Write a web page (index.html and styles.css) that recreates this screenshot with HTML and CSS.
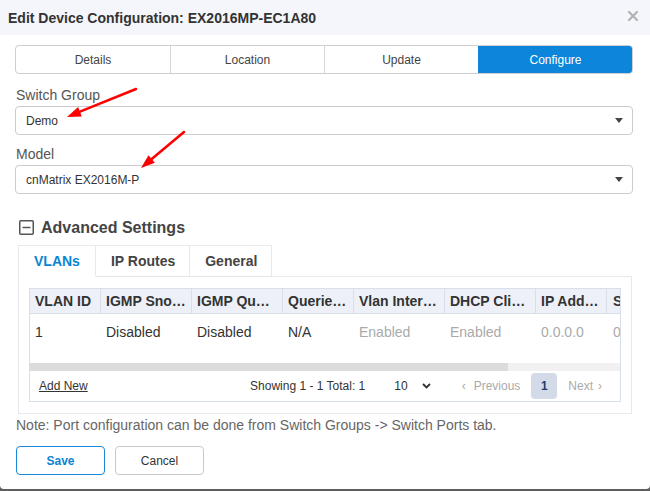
FILE: index.html
```html
<!DOCTYPE html>
<html>
<head>
<meta charset="utf-8">
<link rel="stylesheet" href="styles.css">
</head>
<body>
<div class="modal">
  <div class="modal-header">
    <span class="title">Edit Device Configuration: EX2016MP-EC1A80</span>
    <svg class="close" width="10" height="10" viewBox="0 0 10 10"><path d="M1 1L9 9M9 1L1 9" stroke="#b3b3b3" stroke-width="2.2" stroke-linecap="square"/></svg>
  </div>
  <div class="modal-body">
    <div class="segmented">
      <div class="seg">Details</div>
      <div class="seg">Location</div>
      <div class="seg">Update</div>
      <div class="seg active">Configure</div>
    </div>

    <div class="field">
      <div class="label">Switch Group</div>
      <div class="select"><span>Demo</span><svg width="8" height="5" viewBox="0 0 8 5"><path d="M0 0H8L4 5Z" fill="#444"/></svg></div>
    </div>
    <div class="field">
      <div class="label">Model</div>
      <div class="select"><span>cnMatrix EX2016M-P</span><svg width="8" height="5" viewBox="0 0 8 5"><path d="M0 0H8L4 5Z" fill="#444"/></svg></div>
    </div>

    <div class="adv-title">
      <svg width="15" height="15" viewBox="0 0 15 15"><rect x="0.75" y="0.75" width="13.5" height="13.5" rx="1" fill="none" stroke="#555" stroke-width="1.5"/><path d="M3.5 7.5H11.5" stroke="#555" stroke-width="1.5"/></svg>
      <span>Advanced Settings</span>
    </div>

    <div class="tabs">
      <div class="tab active">VLANs</div>
      <div class="tab">IP Routes</div>
      <div class="tab">General</div>
    </div>
    <div class="panel">
      <div class="grid">
        <div class="grid-row head">
          <div class="c w71">VLAN ID</div>
          <div class="c w91">IGMP Sno…</div>
          <div class="c w91">IGMP Qu…</div>
          <div class="c w71">Querie…</div>
          <div class="c w91">Vlan Inter…</div>
          <div class="c w91">DHCP Cli…</div>
          <div class="c w71">IP Add…</div>
          <div class="c last">S</div>
        </div>
        <div class="grid-body">
          <div class="grid-row data">
            <div class="c w71">1</div>
            <div class="c w91">Disabled</div>
            <div class="c w91">Disabled</div>
            <div class="c w71">N/A</div>
            <div class="c w91 muted">Enabled</div>
            <div class="c w91 muted">Enabled</div>
            <div class="c w71 muted">0.0.0.0</div>
            <div class="c last muted">0</div>
          </div>
        </div>
        <div class="hscroll"><div class="thumb"></div></div>
        <div class="grid-footer">
          <a class="add-new">Add New</a>
          <span class="showing">Showing 1 - 1 Total: 1</span>
          <span class="page-size">10</span>
          <svg class="chev" width="9" height="6" viewBox="0 0 9 6"><path d="M1 1L4.5 4.5L8 1" fill="none" stroke="#333" stroke-width="1.8"/></svg>
          <span class="pg disabled"><span class="lsaquo">‹</span>Previous</span>
          <span class="pg-num">1</span>
          <span class="pg disabled">Next<span class="rsaquo">›</span></span>
        </div>
      </div>
    </div>

    <div class="note">Note: Port configuration can be done from Switch Groups -&gt; Switch Ports tab.</div>

    <div class="actions">
      <button class="btn primary">Save</button>
      <button class="btn">Cancel</button>
    </div>
  </div>

  <svg class="annotations" width="650" height="491" viewBox="0 0 650 491">
    <line x1="136" y1="89" x2="80" y2="111.7" stroke="#ff0000" stroke-width="2.5" stroke-linecap="round"/>
    <polygon points="67,117 78.1,107.1 81.8,116.4" fill="#ff0000"/>
    <line x1="184" y1="132" x2="151.7" y2="159" stroke="#ff0000" stroke-width="2.5" stroke-linecap="round"/>
    <polygon points="141,168 148.5,155.2 154.9,162.8" fill="#ff0000"/>
  </svg>
</div>
</body>
</html>
```

FILE: styles.css
```css
* { box-sizing: border-box; }
html, body { margin: 0; padding: 0; }
body {
  background: #5e5e5e;
  font-family: "Liberation Sans", Arial, sans-serif;
  color: #333;
  width: 650px;
  height: 491px;
  overflow: hidden;
}
.modal {
  position: relative;
  width: 650px;
  height: 489px;
  background: #fff;
  border-radius: 0 0 4px 4px;
  overflow: hidden;
}
.modal-header {
  height: 35px;
  background: #f5f6fb;
  display: flex;
  align-items: center;
  justify-content: space-between;
  padding: 0 12px 0 8px;
}
.title {
  font-size: 14px;
  font-weight: bold;
  color: #333;
}
.close { display: block; margin-top: -4px; }

.modal-body {
  padding: 10px 17px 0 15px;
}

.segmented {
  display: grid;
  grid-template-columns: repeat(4, 1fr);
  height: 29px;
  border: 1px solid #cfcfcf;
  border-radius: 4px;
  overflow: hidden;
  margin-bottom: 13px;
}
.seg {
  display: flex;
  align-items: center;
  justify-content: center;
  font-size: 12px;
  color: #444;
  border-left: 1px solid #d6d6d6;
}
.seg:first-child { border-left: none; }
.seg.active {
  background: #0b86db;
  color: #fff;
  border-left-color: #0b86db;
}

.field { margin-bottom: 11px; }
.label {
  font-size: 14px;
  line-height: 17px;
  color: #555;
  padding-left: 1px;
  margin-bottom: 2px;
}
.select {
  height: 29px;
  border: 1px solid #cccccc;
  border-radius: 4px;
  display: flex;
  align-items: center;
  justify-content: space-between;
  padding: 0 9px 0 10px;
  font-size: 12px;
  color: #333;
}

.adv-title {
  margin-top: 25px;
  height: 17px;
  display: flex;
  align-items: center;
  padding-left: 4px;
  gap: 7px;
  font-size: 16px;
  font-weight: bold;
  color: #444;
}
.adv-title svg { display: block; }

.tabs {
  margin: 9px 0 0 3px;
  display: flex;
  position: relative;
  z-index: 1;
  margin-bottom: -1px;
}
.tab {
  height: 32px;
  padding: 0 14px 0 15px;
  display: flex;
  align-items: center;
  font-size: 14px;
  font-weight: bold;
  color: #444;
  border-top: 1px solid #e6e9ee;
  border-right: 1px solid #e6e9ee;
  border-bottom: 1px solid #e3e6eb;
  background: #fff;
}
.tab.active {
  padding: 0 15px 0 15px;
  color: #0b84d4;
  border-left: 1px solid #e6e9ee;
  border-bottom-color: #fff;
}
.panel {
  margin: 0 1px 0 3px;
  border: 1px solid #e6e9ee;
  padding: 11px 10px 11px 10px;
}

.grid {
  border: 1px solid #d8dfe9;
  overflow: hidden;
}
.grid-row {
  display: flex;
  white-space: nowrap;
}
.grid-row.head {
  height: 25px;
  background: #edf1f7;
  border-bottom: 1px solid #d8dfe9;
}
.head .c {
  font-weight: bold;
  font-size: 14px;
  color: #333;
  line-height: 24px;
  border-right: 1px solid #d8dfe9;
}
.head .c.last { border-right: none; }
.c {
  flex: none;
  padding-left: 5px;
  overflow: hidden;
}
.w71 { width: 71px; }
.w91 { width: 91px; }
.c.last { width: 14px; padding-left: 6px; overflow: visible; }
.grid-body { height: 49px; }
.grid-row.data {
  padding-top: 9px;
  font-size: 14px;
  line-height: 18px;
  color: #333;
}
.muted { color: #aaaaaa; }

.hscroll {
  height: 8px;
  background: #f1f1f1;
}
.thumb {
  width: 478px;
  height: 8px;
  background: #dcdcdc;
}
.grid-footer {
  height: 30px;
  display: flex;
  align-items: center;
  font-size: 12px;
  color: #333;
  padding: 0 18px 0 9px;
}
.add-new {
  text-decoration: underline;
  color: #333;
}
.showing { margin-left: auto; }
.page-size { margin-left: 29px; }
.chev { margin-left: 14px; display: block; }
.pg { color: #aaaaaa; }
.lsaquo { margin-right: 8px; }
.rsaquo { margin-left: 5px; }
.chev + .pg { margin-left: 31px; }
.pg-num {
  margin: 0 11px 0 11px;
  width: 26px;
  height: 26px;
  border-radius: 4px;
  background: #d3dbe8;
  color: #1c3d6e;
  font-weight: bold;
  display: flex;
  align-items: center;
  justify-content: center;
}

.note {
  margin-top: 3px;
  font-size: 14px;
  line-height: 16px;
  color: #666;
  padding-left: 1px;
}
.actions {
  margin-top: 13px;
  display: flex;
  gap: 10px;
  padding-left: 1px;
}
.btn {
  width: 89px;
  height: 29px;
  border: 1px solid #c9c9c9;
  border-radius: 4px;
  background: #fff;
  font-family: "Liberation Sans", Arial, sans-serif;
  font-size: 12px;
  color: #333;
  padding: 0;
}
.btn.primary {
  border-color: #1a88d8;
  color: #0b84d4;
  font-weight: bold;
}

.annotations {
  position: absolute;
  left: 0;
  top: 0;
  pointer-events: none;
}
```
